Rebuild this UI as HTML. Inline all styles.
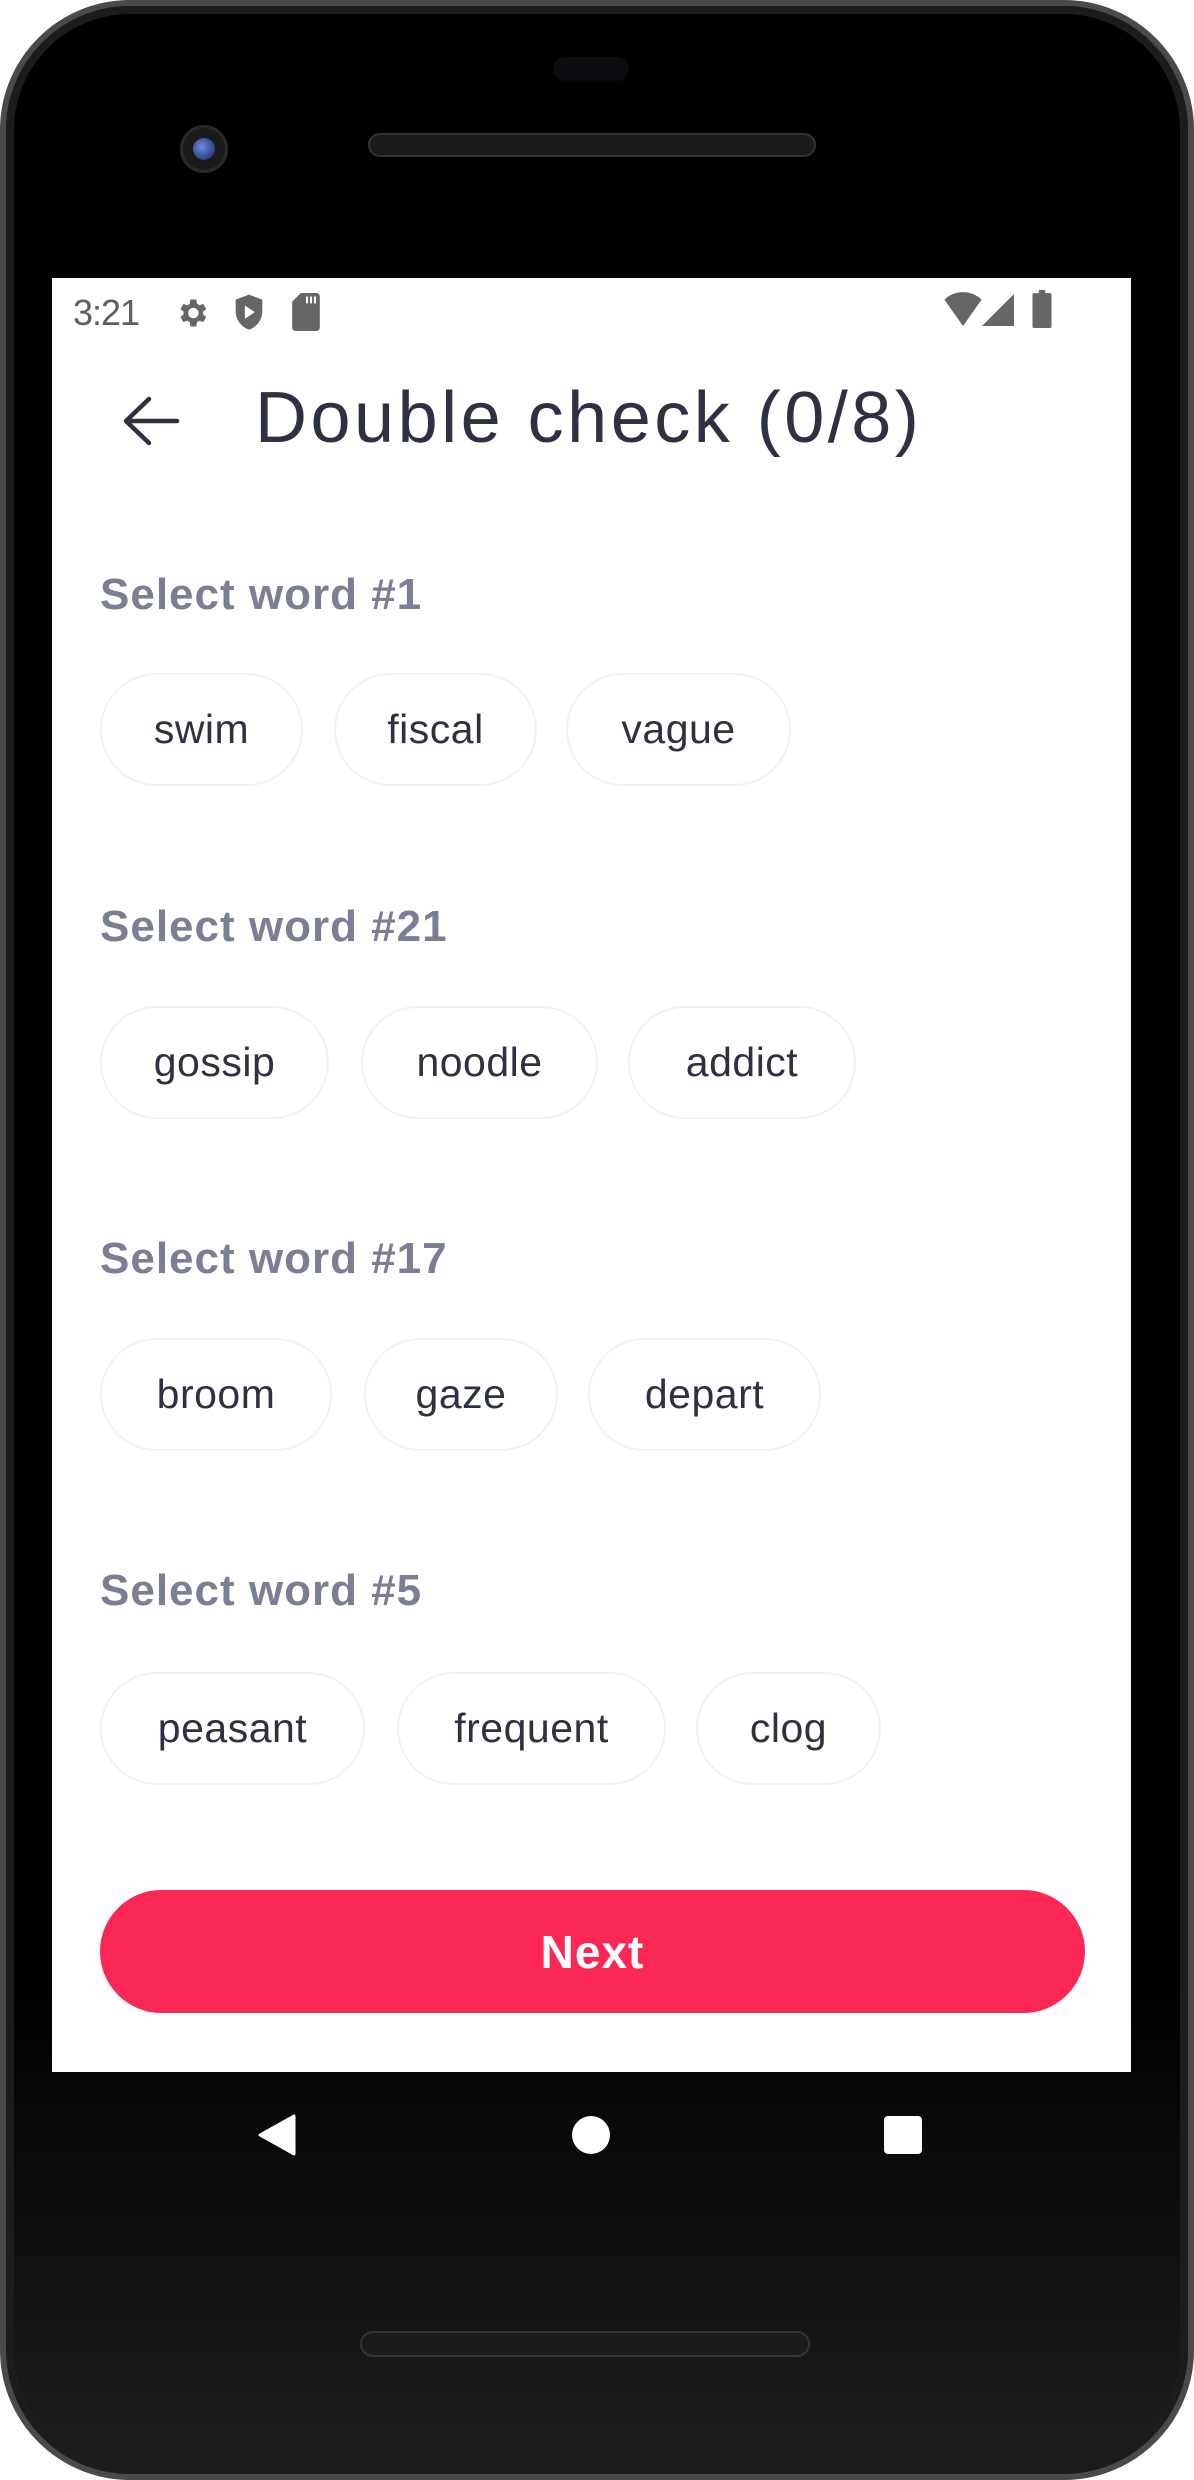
<!DOCTYPE html>
<html><head><meta charset="utf-8"><style>
*{margin:0;padding:0;box-sizing:border-box}
html,body{width:1194px;height:2480px;background:#fff;overflow:hidden}
body{position:relative;font-family:"Liberation Sans",sans-serif}
.phone{position:absolute;left:0;top:0;width:1194px;height:2480px;border-radius:130px;background:linear-gradient(#000,#000 80%,#1e1e1e);border:6px solid #4a4a4a;box-shadow:inset 0 0 0 8px #1c1c1c}
.screen{position:absolute;left:52px;top:278px;width:1079px;height:1794px;background:#fff}
.abs{position:absolute}
.lbl{position:absolute;left:48px;font-weight:bold;font-size:44px;color:#7a7f93;transform:translateY(-50%);letter-spacing:1px}
.chip{position:absolute;height:113px;border:2px solid #f1f1f6;border-radius:57px;display:flex;align-items:center;justify-content:center;font-size:41px;color:#2d3142;letter-spacing:0.5px}
</style></head><body>
<div class="phone"></div>
<div class="abs" style="left:553px;top:57px;width:76px;height:24px;border-radius:12px;background:#0c0c10"></div>
<div class="abs" style="left:368px;top:133px;width:448px;height:24px;border-radius:12px;background:#1b1b1b;border:2px solid #333"></div>
<div class="abs" style="left:180px;top:125px;width:48px;height:48px;border-radius:50%;background:#1a1a1a;border:3px solid #2a2a2a"><div style="margin:10px;width:22px;height:22px;border-radius:50%;background:radial-gradient(circle at 40% 40%,#6a8ae0,#14205a)"></div></div>
<div class="abs" style="left:360px;top:2331px;width:450px;height:26px;border-radius:13px;background:#1b1b1b;border:2px solid #333"></div>

<div class="screen">
  <div class="abs" style="left:21px;top:14px;font-size:36px;color:#5f5f5f;letter-spacing:-1px">3:21</div>
  <svg class="abs" style="left:122px;top:17px" width="36" height="36" viewBox="0 0 24 24"><path fill="#666" d="M19.4 13a7.5 7.5 0 000-2l2.1-1.6-2-3.5-2.5 1a7 7 0 00-1.7-1L14.9 3h-4l-.4 2.9a7 7 0 00-1.7 1l-2.5-1-2 3.5L6.4 11a7.5 7.5 0 000 2l-2.1 1.6 2 3.5 2.5-1a7 7 0 001.7 1l.4 2.9h4l.4-2.9a7 7 0 001.7-1l2.5 1 2-3.5zM12.9 15.5a3.5 3.5 0 110-7 3.5 3.5 0 010 7z"/></svg>
  <svg class="abs" style="left:180px;top:15px" width="34" height="40" viewBox="0 0 20 24"><path fill="#666" d="M10 1L2 4v7c0 5 3.5 9.5 8 11 4.5-1.5 8-6 8-11V4z"/><path fill="#fff" d="M7.5 7.5v8l6-4z"/></svg>
  <svg class="abs" style="left:240px;top:15px" width="28" height="38" viewBox="0 0 16 22"><path fill="#666" d="M5 0h9a2 2 0 012 2v18a2 2 0 01-2 2H2a2 2 0 01-2-2V5z"/><path fill="#fff" d="M8 2h1.2v4H8zM10.3 2h1.2v4h-1.2zM12.6 2h1.2v4h-1.2z"/></svg>
  <svg class="abs" style="left:892px;top:14px" width="38" height="34" viewBox="0 0 24 22"><path fill="#666" d="M12 22L0 5a17 17 0 0124 0z"/></svg>
  <svg class="abs" style="left:930px;top:16px" width="32" height="32" viewBox="0 0 20 20"><path fill="#666" d="M20 0v20H0z"/></svg>
  <svg class="abs" style="left:980px;top:12px" width="20" height="38" viewBox="0 0 12 24"><path fill="#666" d="M4 0h4v2h3a1 1 0 011 1v20a1 1 0 01-1 1H1a1 1 0 01-1-1V3a1 1 0 011-1h3z"/></svg>

  <svg class="abs" style="left:69px;top:117px" width="60" height="52" viewBox="0 0 60 52"><path d="M56 26H6M28 4L5 26l23 22" fill="none" stroke="#2d3142" stroke-width="4.5" stroke-linecap="round" stroke-linejoin="round"/></svg>
  <div class="abs" style="left:203px;top:140px;transform:translateY(-50%);font-size:72px;color:#2d3142;letter-spacing:3.5px;white-space:nowrap">Double check (0/8)</div>

  <div class="lbl" style="top:317px">Select word #1</div>
  <div class="chip" style="left:48px;top:395px;width:203px">swim</div>
  <div class="chip" style="left:282px;top:395px;width:203px">fiscal</div>
  <div class="chip" style="left:514px;top:395px;width:225px">vague</div>

  <div class="lbl" style="top:649px">Select word #21</div>
  <div class="chip" style="left:48px;top:728px;width:229px">gossip</div>
  <div class="chip" style="left:309px;top:728px;width:237px">noodle</div>
  <div class="chip" style="left:576px;top:728px;width:228px">addict</div>

  <div class="lbl" style="top:981px">Select word #17</div>
  <div class="chip" style="left:48px;top:1060px;width:232px">broom</div>
  <div class="chip" style="left:312px;top:1060px;width:194px">gaze</div>
  <div class="chip" style="left:536px;top:1060px;width:233px">depart</div>

  <div class="lbl" style="top:1313px">Select word #5</div>
  <div class="chip" style="left:48px;top:1394px;width:265px">peasant</div>
  <div class="chip" style="left:345px;top:1394px;width:269px">frequent</div>
  <div class="chip" style="left:644px;top:1394px;width:185px">clog</div>

  <div class="abs" style="left:48px;top:1612px;width:985px;height:123px;border-radius:62px;background:#fb2856;color:#fff;font-weight:bold;font-size:46px;display:flex;align-items:center;justify-content:center;letter-spacing:1px">Next</div>
</div>

<svg class="abs" style="left:258px;top:2114px" width="40" height="42" viewBox="0 0 40 42"><path fill="#fff" d="M36 2v38L2 21z" stroke="#fff" stroke-width="3" stroke-linejoin="round"/></svg>
<div class="abs" style="left:572px;top:2116px;width:38px;height:38px;border-radius:50%;background:#fff"></div>
<div class="abs" style="left:884px;top:2116px;width:38px;height:38px;border-radius:4px;background:#fff"></div>
</body></html>
